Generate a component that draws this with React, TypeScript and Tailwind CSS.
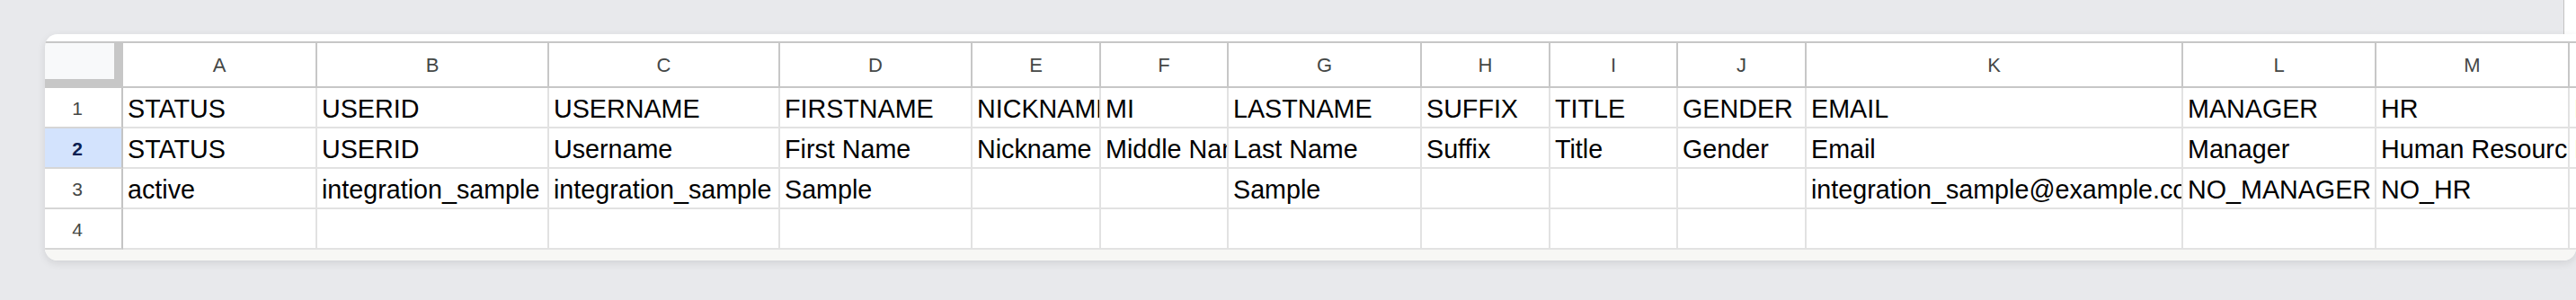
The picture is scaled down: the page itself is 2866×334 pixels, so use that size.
import React from "react";

type Col = { l: string; r: [string, string, string] };

const cols: Col[] = [
  { l: "A", r: ["STATUS", "STATUS", "active"] },
  { l: "B", r: ["USERID", "USERID", "integration_sample"] },
  { l: "C", r: ["USERNAME", "Username", "integration_sample"] },
  { l: "D", r: ["FIRSTNAME", "First Name", "Sample"] },
  { l: "E", r: ["NICKNAME", "Nickname", ""] },
  { l: "F", r: ["MI", "Middle Name", ""] },
  { l: "G", r: ["LASTNAME", "Last Name", "Sample"] },
  { l: "H", r: ["SUFFIX", "Suffix", ""] },
  { l: "I", r: ["TITLE", "Title", ""] },
  { l: "J", r: ["GENDER", "Gender", ""] },
  { l: "K", r: ["EMAIL", "Email", "integration_sample@example.com"] },
  { l: "L", r: ["MANAGER", "Manager", "NO_MANAGER"] },
  { l: "M", r: ["HR", "Human Resources", "NO_HR"] },
  { l: "N", r: ["DEPARTMENT", "Department", ""] },
];

const font = { fontFamily: '"Liberation Sans", Arial, sans-serif' };

export default function App() {
  const rows = [0, 1, 2, 3];
  return (
    <div
      className="w-[2866px] h-[334px] bg-[#e8e9ec] overflow-hidden flex flex-col"
      style={font}
    >
      <div className="h-[38px] flex justify-end shrink-0">
        <div className="w-[14px] h-full bg-white border-l border-[#c4c4c4]" />
      </div>
      <div className="ml-[50px] w-[2816px] bg-white rounded-tl-[14px] rounded-b-[14px] overflow-hidden shadow-[0_3px_10px_rgba(0,0,0,0.10)] pt-[8px]">
        <div className="grid grid-cols-[87px_216px_258px_257px_214px_143px_142px_215px_143px_142px_143px_419px_215px_215px_215px] grid-rows-[50px_45px_45px_45px_45px] w-max border-t-2 border-[#c7c7c7]">
          {/* corner */}
          <div className="bg-[#c7c7c7]">
            <div className="w-[77px] h-[40px] bg-[#f8f9fa]" />
          </div>
          {cols.map((c) => (
            <div
              key={c.l}
              className="flex items-center justify-center pt-[2px] border-r-2 border-b-2 border-[#c7c7c7] text-[22px] leading-none text-[#444746] bg-white"
            >
              {c.l}
            </div>
          ))}
          {rows.map((ri) => (
            <React.Fragment key={ri}>
              <div
                className={
                  ri === 1
                    ? "flex items-center justify-center pr-[13px] pt-[2px] border-r-2 border-r-[#c4c4c4] border-b-2 border-b-[#d6d6d6] bg-[#d3e3fd] text-[21px] leading-none font-bold text-[#0b1f52]"
                    : "flex items-center justify-center pr-[13px] pt-[2px] border-r-2 border-r-[#c4c4c4] border-b-2 border-b-[#d6d6d6] bg-white text-[21px] leading-none text-[#444746]"
                }
              >
                {ri + 1}
              </div>
              {cols.map((c) => (
                <div
                  key={c.l}
                  className="flex items-center pl-[5px] pt-[3px] border-r-2 border-b-2 border-[#e2e2e2] overflow-hidden whitespace-nowrap text-[28.7px] leading-none text-black"
                >
                  {ri < 3 ? c.r[ri] : ""}
                </div>
              ))}
            </React.Fragment>
          ))}
        </div>
        <div className="h-[12px] bg-[#f7f7f5]" />
      </div>
    </div>
  );
}
